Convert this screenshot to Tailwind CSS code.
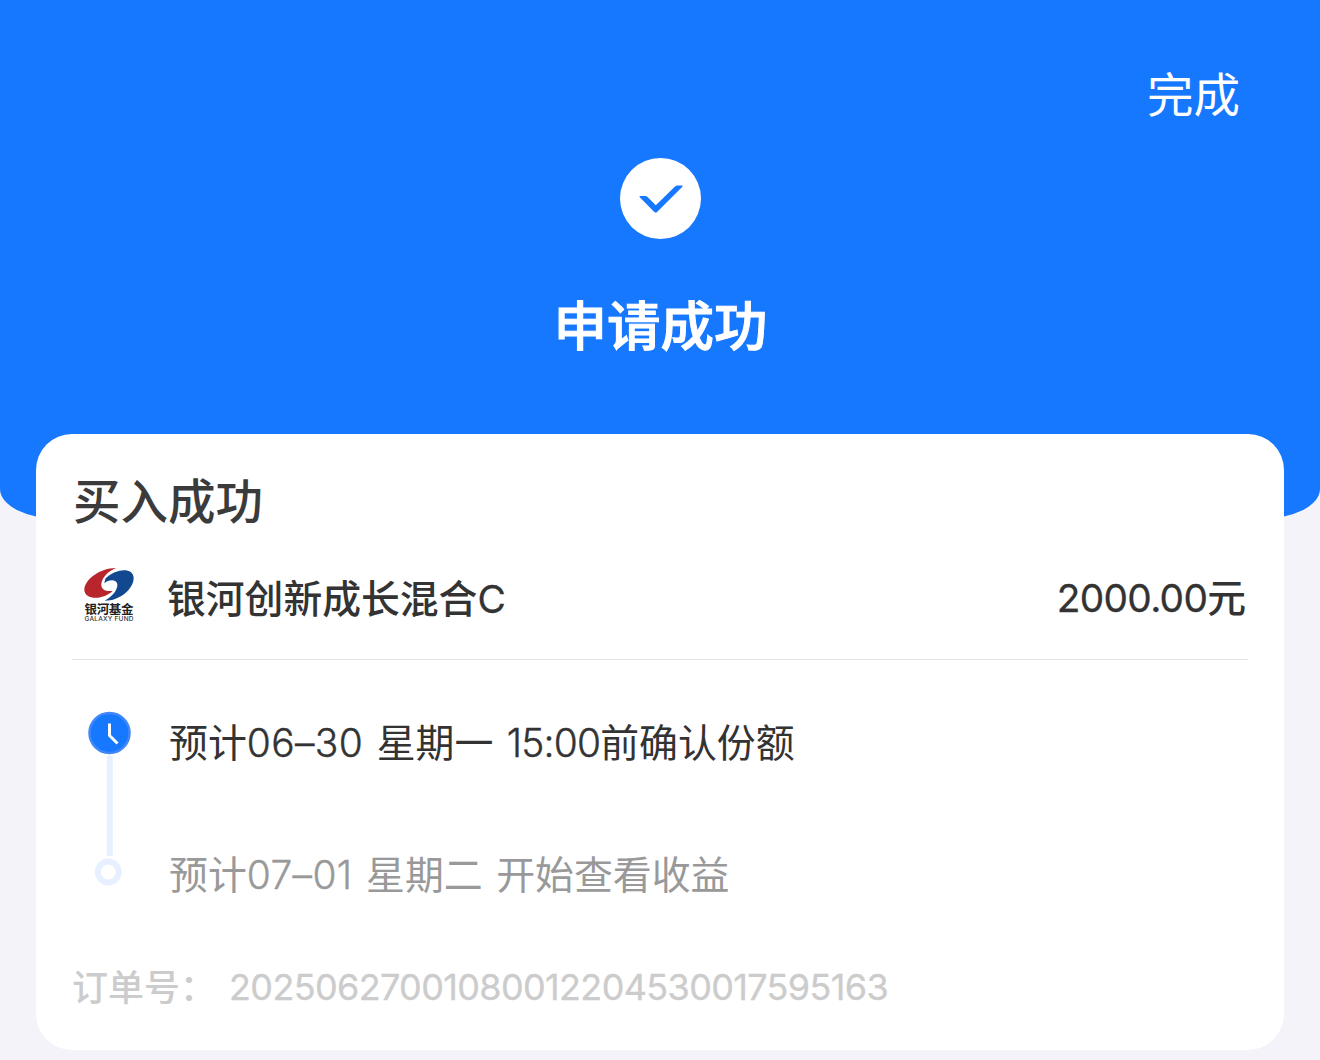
<!DOCTYPE html>
<html lang="zh-CN">

<head>
  <meta charset="UTF-8">
  <meta name="viewport" content="width=device-width, initial-scale=1.0">
  <title>申请成功</title>
  <script src="https://cdn.jsdelivr.net/npm/@tailwindcss/browser@4"></script>
</head>

<body class="bg-[#f4f3f9] font-['Inter','Noto_Sans_CJK_SC',sans-serif] text-[#333] min-h-screen overflow-hidden">
  <header class="h-[519px] pt-[65px] bg-[#1677ff] text-white rounded-b-[60px_30px] flex flex-col items-center">
    <a href="#" class="self-end mr-20 text-[46.5px] leading-[60px]">完成</a>
    <svg class="mt-[33px] w-[81px] h-[81px]" viewBox="0 0 81 81">
      <circle cx="40.5" cy="40.5" r="40.5" fill="#fff" />
      <path d="M20 39.500Q18.500 38 20.300 38H25.500Q26.500 38 27.300 38.800L35.800 47.300L55 28.500Q56.200 27.500 57.500 27.500H61.500Q63.500 27.500 62.100 28.900L37.300 53.700Q35.700 55.400 34.100 53.700Z" fill="#1677ff" />
    </svg>
    <h1 class="mt-[52px] pl-px text-[53.5px] leading-[72px] font-medium [-webkit-text-stroke:1px_#fff]">申请成功</h1>
  </header>

  <main class="relative mx-9 -mt-[85px] h-[616px] px-9 pt-[33px] bg-white rounded-[36px]">
    <h2 class="ml-px pt-px text-[47.5px] leading-[67px] font-medium text-[#3b3b3b]">买入成功</h2>

    <div class="flex items-center h-[125px] border-b border-[#e3e3e3] text-[38.8px] font-medium">
      <!-- fund logo -->
      <svg class="w-[54px] h-[58px] ml-[10px] -mt-[2px]" viewBox="0 0 54 58">
        <g transform="translate(-12 -12) scale(.3333)">
          <path d="M138 39C94 38 43 72 43 105C44 133 94 138 128 108C106 110 92 103 94 86C97 66 117 47 138 39Z" fill="#b9252d" />
          <path d="M104 137C146 138 191 104 191 68C190 38 140 38 107 70C105 76 104 79 103 85C116 72 140 72 142 88C144 106 124 127 104 137Z" fill="#12488f" />
        </g>
        <text x="2.500" y="46.500" textLength="49" font-size="12.500" font-weight="bold" font-family="Noto Sans CJK SC" fill="#222">银河基金</text>
        <text x="2.500" y="54" textLength="49" font-size="6.500" font-weight="500" font-family="Inter" fill="#333">GALAXY FUND</text>
      </svg>
      <span class="ml-[31px] mt-[5px]">银河创新成长混合<span class="font-normal [-webkit-text-stroke:0.3px]">C</span></span>
      <span class="ml-auto mr-[2px] mt-[2px]"><span class="tracking-[-0.7px] font-normal [-webkit-text-stroke:0.3px]">2000.00</span>元</span>
    </div>

    <div class="flex mt-[51px] h-[200px]">
      <svg class="ml-4 w-[44px] h-[178px]" viewBox="0 0 44 178">
        <path d="M21.800 44.500V145" stroke="#e7f0ff" stroke-width="6" />
        <circle cx="21.500" cy="22" r="20" fill="#1677ff" stroke="#4087fa" stroke-width="2.500" />
        <path d="M21.500 12.500V24.500L29.500 32.500" fill="none" stroke="#fff" stroke-width="3" />
        <circle cx="20.300" cy="161" r="10.500" fill="#fff" stroke="#e7f0ff" stroke-width="6" />
      </svg>
      <div class="ml-[37px] pt-[2px] text-[38.9px] leading-[60px] [word-spacing:2.5px]">
        <p>预计<span class="font-light tracking-[0.4px] [-webkit-text-stroke:0.4px]">06–30</span> 星期一 <span class="font-light tracking-[-0.8px] [-webkit-text-stroke:0.4px]">15:00</span>前确认份额</p>
        <p class="mt-[72px] text-[#999]">预计<span class="font-light tracking-[0.4px] [-webkit-text-stroke:0.4px]">07–01</span> 星期二 开始查看收益</p>
      </div>
    </div>

    <div class="flex mt-[48px] text-[36px] leading-[56px] text-[#ccc] font-medium">
      <span class="pt-px">订单号：</span>
      <span class="ml-[13px] tracking-[-0.65px] font-normal [-webkit-text-stroke:0.3px]">20250627001080012204530017595163</span>
    </div>
  </main>
</body>

</html>
